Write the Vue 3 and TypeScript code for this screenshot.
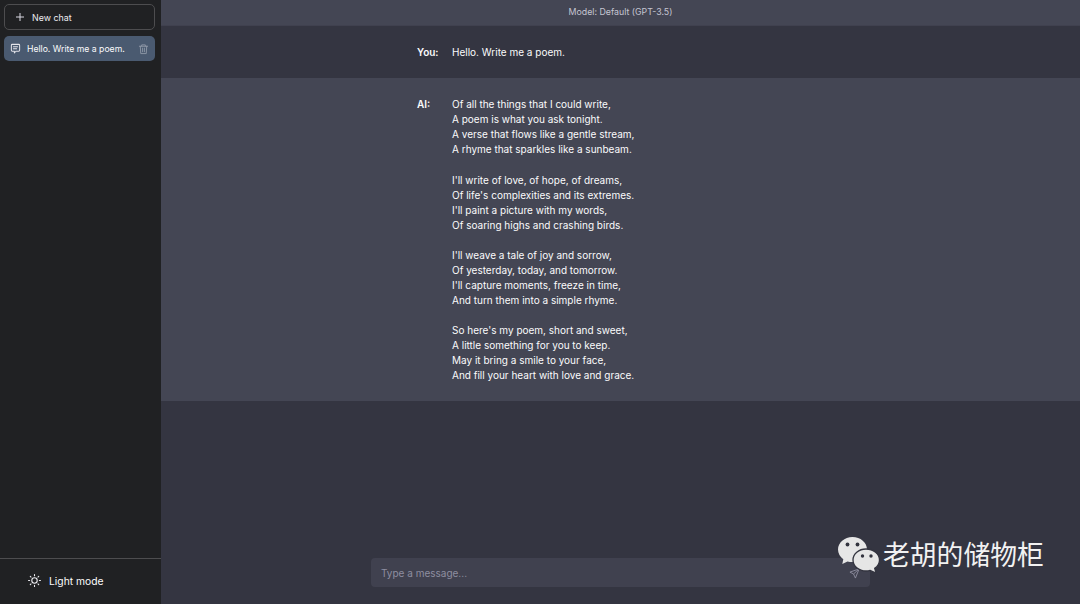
<script setup lang="ts">
const poem: string[] = [
  "Of all the things that I could write,",
  "A poem is what you ask tonight.",
  "A verse that flows like a gentle stream,",
  "A rhyme that sparkles like a sunbeam.",
  "",
  "I'll write of love, of hope, of dreams,",
  "Of life's complexities and its extremes.",
  "I'll paint a picture with my words,",
  "Of soaring highs and crashing birds.",
  "",
  "I'll weave a tale of joy and sorrow,",
  "Of yesterday, today, and tomorrow.",
  "I'll capture moments, freeze in time,",
  "And turn them into a simple rhyme.",
  "",
  "So here's my poem, short and sweet,",
  "A little something for you to keep.",
  "May it bring a smile to your face,",
  "And fill your heart with love and grace.",
];
</script>

<template>
  <div class="app">
    <aside class="sidebar">
      <div class="top">
        <button class="new-chat">
          <svg width="8" height="8" viewBox="0 0 8 8" fill="none" stroke="#d9d9e3" stroke-width="1"><path d="M4 0v8M0 4h8" /></svg>
          <span>New chat</span>
        </button>
        <div class="chat-item">
          <svg class="ci" width="11" height="11" viewBox="0 0 24 24" fill="none" stroke="#e4e4ea" stroke-width="2.200" stroke-linecap="round" stroke-linejoin="round"><path d="M3 5a2 2 0 0 1 2-2h14a2 2 0 0 1 2 2v11a2 2 0 0 1-2 2h-6l-3.500 3.500V18H5a2 2 0 0 1-2-2z" /><path d="M7.500 8h9M7.500 12.500h7" /></svg>
          <span class="chat-title">Hello. Write me a poem.</span>
          <svg class="trash" width="11" height="12" viewBox="0 0 24 24" fill="none" stroke="#8e98a6" stroke-width="2" stroke-linecap="round" stroke-linejoin="round"><path d="M3 6h18M8 6V3h8v3M5 6l1 16h12l1-16M10 10v8M14 10v8" /></svg>
        </div>
      </div>
      <div class="bottom">
        <svg width="13" height="13" viewBox="0 0 24 24" fill="none" stroke="#ececf1" stroke-width="2" stroke-linecap="round"><circle cx="12" cy="12" r="5" /><path d="M12 1v2M12 21v2M4.200 4.200l1.400 1.400M18.400 18.400l1.400 1.400M1 12h2M21 12h2M4.200 19.800l1.400-1.400M18.400 5.600l1.400-1.400" /></svg>
        <span>Light mode</span>
      </div>
    </aside>
    <main class="main">
      <header class="header">Model: Default (GPT-3.5)</header>
      <section class="msg you">
        <div class="who">You:</div>
        <div class="body">Hello. Write me a poem.</div>
      </section>
      <section class="msg ai">
        <div class="who">AI:</div>
        <div class="body">
          <div v-for="(line, i) in poem" :key="i" class="line">{{ line }}</div>
        </div>
      </section>
      <div class="spacer"></div>
      <div class="composer">
        <div class="input">
          <span>Type a message...</span>
          <svg class="send" width="11" height="11" viewBox="0 0 24 24" fill="none" stroke="#8e8ea0" stroke-width="2" stroke-linejoin="round"><path d="M22 2 2 9l8 4 4 9zM10 13 22 2" /></svg>
        </div>
      </div>
      <div class="watermark">
        <svg width="42" height="36" viewBox="0 0 42 36">
          <path d="M14.500 0C6.500 0 0 5.600 0 12.500c0 3.900 2.100 7.400 5.300 9.700L4.300 27l5.200-2.500c1.600.4 3.300.6 5 .6 8 0 14.500-5.600 14.500-12.600S22.500 0 14.500 0z" fill="#e6e6e6" />
          <circle cx="9.500" cy="7.500" r="1.900" fill="#33343f" />
          <circle cx="19.500" cy="7.500" r="1.900" fill="#33343f" />
          <path d="M28 12c-7.300 0-13 5-13 11s5.700 11 13 11c1.500 0 2.900-.2 4.200-.6L38 36l-1.300-4.600C39.900 29.300 41.500 26.300 41.500 23c0-6-6-11-13.500-11z" fill="#e6e6e6" stroke="#33343f" stroke-width="1.300" />
          <circle cx="24.500" cy="19" r="1.700" fill="#33343f" />
          <circle cx="33" cy="19" r="1.700" fill="#33343f" />
        </svg>
        <span>老胡的储物柜</span>
      </div>
    </main>
  </div>
</template>

<style>
html, body { margin: 0; padding: 0; background: #343541; }
</style>

<style scoped>
.app {
  width: 1080px;
  height: 604px;
  display: flex;
  overflow: hidden;
  font-family: Inter, "Noto Sans CJK SC", sans-serif;
  font-size: 10px;
  color: #fbfbfc;
}
.sidebar {
  width: 161px;
  flex: none;
  background: #202123;
  display: flex;
  flex-direction: column;
  justify-content: space-between;
}
.top {
  padding: 4px 6px 0 4px;
  display: flex;
  flex-direction: column;
  gap: 6px;
}
.new-chat {
  height: 26px;
  box-sizing: border-box;
  padding: 0 0 0 11px;
  display: flex;
  align-items: center;
  gap: 8px;
  background: transparent;
  border: 1px solid #4d4d4f;
  border-radius: 5px;
  color: #ececf1;
  font: inherit;
  font-size: 8.850px;
}
.chat-item {
  height: 25px;
  box-sizing: border-box;
  padding: 0 6px;
  display: flex;
  align-items: center;
  background: #4a5a70;
  border-radius: 5px;
  font-size: 8.660px;
}
.chat-title { margin-left: 6px; flex: 1; white-space: nowrap; }
.bottom {
  height: 43px;
  border-top: 1px solid #4d4d4f;
  display: flex;
  align-items: center;
  padding: 0 0 2px 28px;
  gap: 8px;
  font-size: 10.300px;
}
.main {
  flex: 1;
  position: relative;
  display: flex;
  flex-direction: column;
  background: #343541;
}
.header {
  height: 25px;
  background: #444654;
  border-bottom: 1px solid #40414f;
  color: #c5c5d2;
  font-size: 8.800px;
  line-height: 24px;
  text-align: center;
}
.msg {
  display: flex;
  padding-left: 256px;
  line-height: 15px;
  font-size: 10px;
}
.you { height: 52px; align-items: center; background: #343541; }
.ai { background: #444654; height: 323px; box-sizing: border-box; padding-top: 19.300px; }
.who { width: 35px; font-weight: 600; }
.line { min-height: 15.060px; line-height: 15.060px; }
.spacer { flex: 1; }
.composer {
  display: flex;
  padding: 0 0 17px 210px;
}
.input {
  position: relative;
  width: 499px;
  height: 29px;
  box-sizing: border-box;
  padding-left: 10px;
  line-height: 30px;
  background: #40414f;
  border-radius: 4px;
  color: #8e8ea0;
  font-size: 10px;
}
.send { position: absolute; right: 10px; top: 10px; }
.watermark {
  position: absolute;
  left: 677px;
  top: 537px;
  display: flex;
  align-items: center;
  gap: 3px;
  color: #f2f2f2;
  font-size: 26.800px;
  line-height: 36px;
  white-space: nowrap;
}
</style>
